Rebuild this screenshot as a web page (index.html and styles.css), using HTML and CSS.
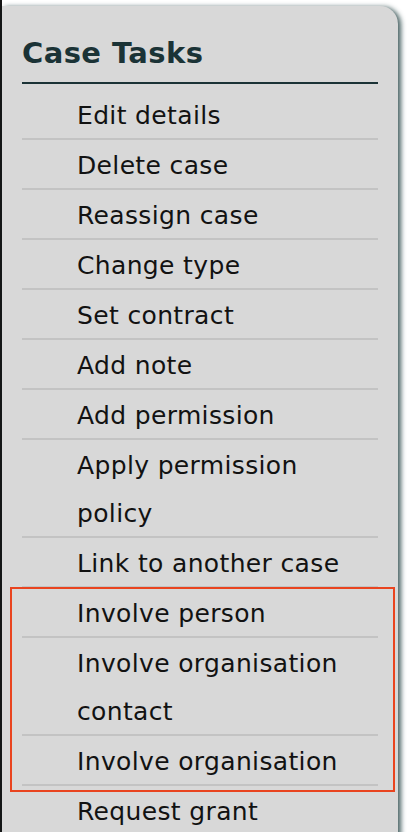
FILE: index.html
```html
<!DOCTYPE html>
<html lang="en">
<head>
<meta charset="utf-8">
<title>Case Tasks</title>
<link rel="stylesheet" href="styles.css">
</head>
<body>
<div class="page">
  <section class="panel">
    <h2 class="panel-title">Case Tasks</h2>
    <ul class="task-list">
      <li class="task">Edit details</li>
      <li class="task">Delete case</li>
      <li class="task">Reassign case</li>
      <li class="task">Change type</li>
      <li class="task">Set contract</li>
      <li class="task">Add note</li>
      <li class="task">Add permission</li>
      <li class="task">Apply permission policy</li>
      <li class="task">Link to another case</li>
      <li class="highlight">
        <ul class="task-list">
          <li class="task">Involve person</li>
          <li class="task">Involve organisation contact</li>
          <li class="task">Involve organisation</li>
        </ul>
      </li>
      <li class="task">Request grant</li>
    </ul>
  </section>
</div>
</body>
</html>
```

FILE: styles.css
```css
* { box-sizing: border-box; }

html, body {
  margin: 0;
  padding: 0;
  background: #ffffff;
  overflow: hidden;
}

.page {
  border-left: 2px solid #141414;
  height: 832px;
  padding-top: 6px;
  padding-right: 10px;
}

.panel {
  background: #d8d8d8;
  border-top-right-radius: 18px;
  box-shadow: 3px 1px 5px rgba(40, 70, 72, 0.85);
  padding: 30px 20px 40px 20px;
  min-height: 900px;
  font-family: "DejaVu Sans", Verdana, sans-serif;
}

.panel-title {
  margin: 0 0 6px 0;
  font-size: 29px;
  line-height: 34px;
  font-weight: bold;
  letter-spacing: 0.4px;
  color: #1b3336;
  padding-bottom: 12px;
  border-bottom: 2px solid #1b3336;
}

.task-list {
  list-style: none;
  margin: 0;
  padding: 0;
}

.task {
  font-size: 25px;
  line-height: 48px;
  letter-spacing: 0.35px;
  color: #121212;
  padding: 2px 20px 0 55px;
  box-shadow: inset 0 -2px 0 #c3c3c3;
}

.highlight {
  position: relative;
}

.highlight::after {
  content: "";
  position: absolute;
  top: -1px;
  bottom: -6px;
  left: -12px;
  right: -17px;
  border: 2px solid #e9441f;
  pointer-events: none;
}
```
